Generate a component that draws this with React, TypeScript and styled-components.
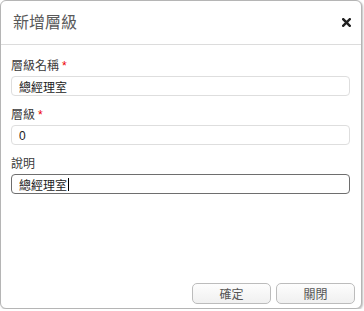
import styled, { createGlobalStyle } from "styled-components";

const GlobalStyle = createGlobalStyle`
  html, body {
    margin: 0;
    padding: 0;
    background: #fff;
  }
  * {
    box-sizing: border-box;
  }
`;

type Field = {
  label: string;
  value: string;
  required?: boolean;
  active?: boolean;
};

const fields: Field[] = [
  { label: "層級名稱", value: "總經理室", required: true },
  { label: "層級", value: "0", required: true },
  { label: "說明", value: "總經理室", active: true },
];

export default function App() {
  return (
    <>
      <GlobalStyle />
      <Dialog>
        <Header>
          <Title>新增層級</Title>
          <CloseButton aria-label="close">
            <svg width="9" height="9" viewBox="0 0 9 9">
              <path d="M1.2 1.2 L7.8 7.8 M7.8 1.2 L1.2 7.8" stroke="#222" strokeWidth="2.4" strokeLinecap="square" />
            </svg>
          </CloseButton>
        </Header>
        <Body>
          {fields.map((f) => (
            <FieldRow key={f.label}>
              <Label>
                {f.label}
                {f.required && <Star>*</Star>}
              </Label>
              <InputBox $active={f.active}>
                <TextInput defaultValue={f.value} />
                {f.active && <Caret />}
              </InputBox>
            </FieldRow>
          ))}
        </Body>
        <Footer>
          <ActionButton>確定</ActionButton>
          <ActionButton>關閉</ActionButton>
        </Footer>
      </Dialog>
    </>
  );
}

const Dialog = styled.div`
  width: 362px;
  height: 309px;
  display: flex;
  flex-direction: column;
  border: 1px solid #b5b5b5;
  border-radius: 6px;
  background: #fff;
  box-shadow: 1px 1px 2px rgba(0, 0, 0, 0.25);
  font-family: "Liberation Sans", "Noto Sans CJK TC", sans-serif;
  overflow: hidden;
`;

const Header = styled.div`
  height: 44px;
  flex: none;
  display: flex;
  align-items: center;
  justify-content: space-between;
  padding: 0 10px 0 12px;
  border-bottom: 1px solid #dcdcdc;
`;

const Title = styled.h3`
  margin: 0;
  font-size: 16px;
  font-weight: normal;
  color: #5a5a5a;
  line-height: 20px;
`;

const CloseButton = styled.span`
  display: flex;
  align-items: center;
  padding: 0;
`;

const Body = styled.div`
  flex: 1;
  display: flex;
  flex-direction: column;
  gap: 11px;
  padding: 13px 11px 0 10px;
`;

const FieldRow = styled.div`
  display: flex;
  flex-direction: column;
  gap: 1px;
`;

const Label = styled.label`
  font-size: 12px;
  line-height: 17px;
  color: #3a3a3a;
`;

const Star = styled.span`
  color: #e00;
  margin-left: 3px;
`;

const InputBox = styled.div<{ $active?: boolean }>`
  position: relative;
  height: 20px;
  border: 1px solid ${(p) => (p.$active ? "#6e6e6e" : "#dedede")};
  border-radius: 4px;
  background: #fff;
`;

const TextInput = styled.input`
  width: 100%;
  height: 100%;
  padding: 0 7px;
  font-family: inherit;
  font-size: 12px;
  color: #222;
  border: none;
  background: transparent;
  outline: none;
`;

/* fake text cursor sitting after the value of the focused field */
const Caret = styled.span`
  position: absolute;
  left: 56px;
  top: 3px;
  width: 1px;
  height: 13px;
  background: #000;
`;

const Footer = styled.div`
  flex: none;
  display: flex;
  justify-content: flex-end;
  gap: 5px;
  padding: 0 6px 4px 0;
`;

const ActionButton = styled.button`
  width: 79px;
  height: 21px;
  padding: 0;
  font-family: inherit;
  font-size: 12px;
  color: #555;
  border: 1px solid #bcbcbc;
  border-radius: 5px;
  background: linear-gradient(#fdfdfd, #f0f0f0);
  cursor: pointer;
`;
